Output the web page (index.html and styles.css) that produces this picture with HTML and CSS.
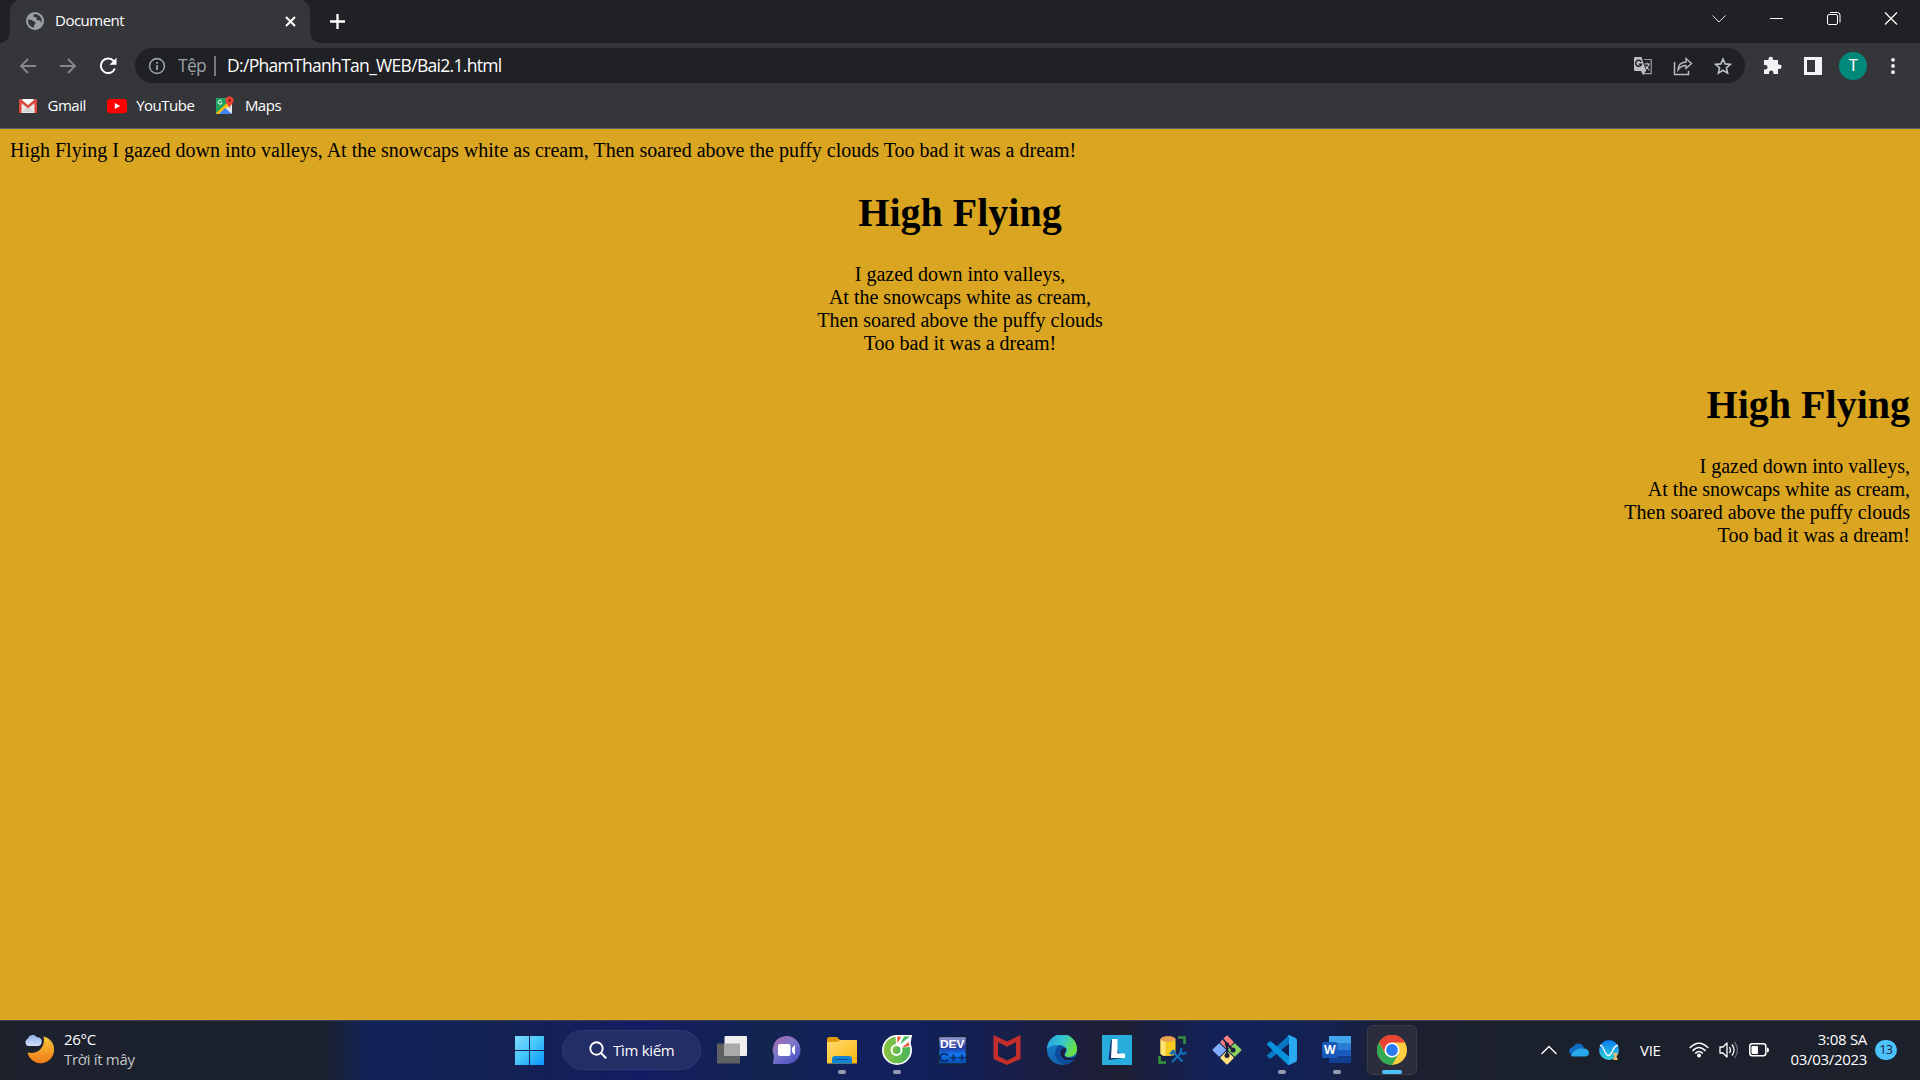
FILE: index.html
```html
<!DOCTYPE html>
<html lang="vi">
<head>
<meta charset="utf-8">
<title>Document</title>
<link rel="stylesheet" href="styles.css">
</head>
<body>
<header class="tabstrip">
  <div class="tab">
    <svg class="tab-icon" width="18" height="18" viewBox="0 0 18 18"><circle cx="9" cy="9" r="9" fill="#9aa0a6"/><path d="M2 7.500c2 .3 4 .2 5 1.500 1 1 2.500 .5 2.500 2 0 1.600-1.700 1.600-1.500 4.500C4 15 1.800 12 2 7.500zM8 2c.2 1.500-1.200 2-.3 3 1 .8 1.800-.6 2.600.5.800 1-.6 2 .7 2.600 1.300.5 2-.2 3 .7.900.7.600 1.800 1.600 1.700C16.500 5.500 13 1.800 8 2z" fill="#35363a"/></svg>
    <span class="tab-title">Document</span>
    <svg width="11" height="11" viewBox="0 0 11 11"><path d="M1 1l9 9M10 1l-9 9" stroke="#fff" stroke-width="2"/></svg>
  </div>
  <svg class="new-tab" width="15" height="15" viewBox="0 0 15 15"><path d="M7.500 0v15M0 7.500h15" stroke="#fff" stroke-width="2.300"/></svg>
  <div class="window-buttons">
    <svg width="14" height="14" viewBox="0 0 14 14"><path d="M.5 3.500l6.500 6.500L13.500 3.500" fill="none" stroke="#ddd"/></svg>
    <svg width="14" height="14" viewBox="0 0 14 14"><path d="M1 6.500h13" stroke="#fff"/></svg>
    <svg width="14" height="14" viewBox="0 0 14 14"><rect x=".5" y="2.500" width="10" height="10" rx="1.500" fill="none" stroke="#fff"/><path d="M3 .5h7.500q2.500 0 2.500 2.500V10.500" fill="none" stroke="#fff"/></svg>
    <svg width="14" height="14" viewBox="0 0 14 14"><path d="M1 .5l12 12M13 .5L1 12.500" stroke="#fff" stroke-width="1.200"/></svg>
  </div>
</header>
<nav class="toolbar">
  <svg class="nav-icon" width="18" height="18" viewBox="0 0 18 18"><path d="M17 9H2M9 2L2 9l7 7" fill="none" stroke="#85878a" stroke-width="1.800"/></svg>
  <svg class="nav-icon" width="18" height="18" viewBox="0 0 18 18"><path d="M1 9h15M9 2l7 7-7 7" fill="none" stroke="#85878a" stroke-width="1.800"/></svg>
  <svg class="nav-icon" width="18" height="18" viewBox="0 0 18 18"><path d="M14.800 4.200A7.300 7.300 0 1 0 15.900 11.500" fill="none" stroke="#fff" stroke-width="2"/><path d="M17.500.8v7h-7z" fill="#fff"/></svg>
  <div class="omnibox">
    <svg width="18" height="18" viewBox="0 0 18 18"><circle cx="9" cy="9" r="7.400" fill="none" stroke="#9aa0a6" stroke-width="1.600"/><path d="M9 8v5M9 5v1.800" stroke="#9aa0a6" stroke-width="1.800"/></svg>
    <span class="scheme">Tệp</span>
    <span class="divider"></span>
    <span class="url">D:/PhamThanhTan_WEB/Bai2.1.html</span>
    <div class="omnibox-actions">
      <svg width="20" height="20" viewBox="0 0 20 20"><path d="M11 3.500h7.200v14.200H9.500" fill="none" stroke="#9b9c9e" stroke-width="1.200"/><path d="M2 1h6.500l4.500 14H2q-1 0-1-1V2q0-1 1-1zM8 15h5l-3 4z" fill="#bdbec0"/><path d="M8.200 5.800A3 3 0 1 0 8.500 8.200H5.800" fill="none" stroke="#202124" stroke-width="1.500"/><path d="M11.500 8h5.500M14 6.500V8M16 8q-1 4-4 6M12.500 10l4 4.500" fill="none" stroke="#bdbec0" stroke-width="1.100"/></svg>
      <svg width="20" height="20" viewBox="0 0 20 20"><path d="M1.500 6v12.500h14V15" fill="none" stroke="#b8babd" stroke-width="1.500"/><path d="M5 14q0-7.500 8-8V2.500l5.500 5-5.500 5V9.500Q8 9.500 5 14z" fill="none" stroke="#b8babd" stroke-width="1.400"/></svg>
      <svg width="20" height="20" viewBox="0 0 20 20"><path d="M10 3l2.100 4.900 5.300.5-4 3.500 1.200 5.200-4.600-2.800-4.600 2.800 1.200-5.200-4-3.500 5.300-.5z" fill="none" stroke="#bdc1c6" stroke-width="1.600"/></svg>
    </div>
  </div>
  <div class="toolbar-actions">
    <svg width="20" height="20" viewBox="0 0 20 20"><path d="M1 4h4.500V3a2.300 2.300 0 0 1 4.600 0V4H15v4.500h1.300a2.300 2.300 0 0 1 0 4.600H15V18h-4.500v-1.300a2.200 2.200 0 0 0-4.500 0V18H1v-4.500h1.300a2.300 2.300 0 0 0 0-4.600H1z" fill="#f1f3f4"/></svg>
    <svg width="20" height="20" viewBox="0 0 20 20"><path fill-rule="evenodd" d="M1 1h18v18H1zM4 4v12h8V4z" fill="#f1f3f4"/></svg>
    <span class="avatar">T</span>
    <svg width="20" height="20" viewBox="0 0 20 20" fill="#f1f3f4"><circle cx="10" cy="3.800" r="1.900"/><circle cx="10" cy="10" r="1.900"/><circle cx="10" cy="16.200" r="1.900"/></svg>
  </div>
</nav>
<nav class="bookmarks">
  <a class="bookmark"><svg width="20" height="20" viewBox="0 0 20 20"><path d="M1.500 3.500h17V17h-17z" fill="#e8e8e8"/><path d="M4 16l6-6 6 6z" fill="#d5d5d5"/><path d="M1 17V4q0-1 1.500-1L10 9.300 17.500 3Q19 3 19 4v13h-2.500V7L10 12.300 3.500 7v10z" fill="#db4437"/><path d="M4 3h12l-6 5z" fill="#fff"/></svg><span>Gmail</span></a>
  <a class="bookmark"><svg width="20" height="20" viewBox="0 0 20 20"><rect y="3" width="20" height="14.200" rx="3" fill="#f00"/><path d="M7.800 7v6l5.400-3z" fill="#fff"/></svg><span>YouTube</span></a>
  <a class="bookmark"><svg width="20" height="20" viewBox="0 0 20 20"><rect x="1" y="2" width="16" height="16" rx="1.500" fill="#e4e7ea"/><path d="M1 3q0-1 1-1h9l1 6-11 10z" fill="#1ca261"/><path d="M1 17L12 7l2 2.500L4 18H2z" fill="#fbbc05"/><path d="M4 18l6-6 7 6z" fill="#4285f4"/><path d="M6.700 5A2 2 0 1 0 7 7H5.300" fill="none" stroke="#fff"/><path d="M14.500.5a4 4 0 0 1 4 4c0 3-3 4-4 8-1-4-4-5-4-8a4 4 0 0 1 4-4z" fill="#ea4335"/><circle cx="14.500" cy="4.500" r="1.400" fill="#8b1d14"/></svg><span>Maps</span></a>
</nav>
<main class="page">
  High Flying I gazed down into valleys, At the snowcaps white as cream, Then soared above the puffy clouds Too bad it was a dream!
  <section class="poem centered">
    <h1>High Flying</h1>
    <p>I gazed down into valleys,<br>At the snowcaps white as cream,<br>Then soared above the puffy clouds<br>Too bad it was a dream!</p>
  </section>
  <section class="poem right">
    <h1>High Flying</h1>
    <p>I gazed down into valleys,<br>At the snowcaps white as cream,<br>Then soared above the puffy clouds<br>Too bad it was a dream!</p>
  </section>
</main>
<footer class="taskbar">
  <div class="weather">
    <svg width="30" height="30" viewBox="0 0 30 30"><defs><linearGradient id="moon" x2="0" y2="1"><stop stop-color="#f6c83a"/><stop offset="1" stop-color="#f07a18"/></linearGradient><linearGradient id="cloud" x2="0" y2="1"><stop stop-color="#8fb4ec"/><stop offset="1" stop-color="#d0ddf8"/></linearGradient></defs><path d="M19.500 1.500A13.500 13.500 0 1 1 3.500 17.500C13.500 20 22 12 19.500 1.500z" fill="url(#moon)"/><path d="M4 11a4 4 0 0 1 0-7.500 5 5 0 0 1 9-1.200c3-.3 5 1.800 4.800 4.700Q17 11 14 11z" fill="url(#cloud)"/></svg>
    <div class="weather-text"><span class="temp">26°C</span><span class="sky">Trời ít mây</span></div>
  </div>
  <div class="apps">
    <svg class="app" width="30" height="30" viewBox="0 0 30 30"><defs><linearGradient id="win" x2="1" y2="1"><stop stop-color="#7fdcfb"/><stop offset=".5" stop-color="#45c4fa"/><stop offset="1" stop-color="#0594fa"/></linearGradient></defs><path d="M1 1h14v14H1zM16 1h14v14H16zM1 16h14v14H1zM16 16h14v14H16z" fill="url(#win)"/></svg>
    <div class="search"><svg width="18" height="18" viewBox="0 0 18 18"><circle cx="7.500" cy="7.500" r="6.200" fill="none" stroke="#fff" stroke-width="1.900"/><path d="M12 12l5.200 5.200" stroke="#fff" stroke-width="2"/></svg><span>Tìm kiếm</span></div>
    <svg class="app" width="30" height="30" viewBox="0 0 30 30"><rect y="8.500" width="23" height="20" rx="1" fill="#5f6063"/><rect x="7.500" y="1" width="22.500" height="20" rx="1" fill="#eee"/><path d="M7.500 8.500H23V21H7.500z" fill="#aaa"/></svg>
    <svg class="app" width="30" height="30" viewBox="0 0 30 30"><defs><linearGradient id="chat" x1="0" y1=".2" x2=".6" y2="1"><stop stop-color="#a56bb4"/><stop offset=".45" stop-color="#7c78c8"/><stop offset="1" stop-color="#5356c5"/></linearGradient></defs><path d="M15 1a14 14 0 1 1-1 28H1l1-8A14 14 0 0 1 15 1z" fill="url(#chat)"/><rect x="6" y="9" width="12.500" height="12" rx="2" fill="#fff"/><path d="M20 13l3-3v10l-3-3z" fill="#fff"/></svg>
    <div class="app running"><svg width="30" height="30" viewBox="0 0 30 30"><defs><linearGradient id="folder" x2="1" y2="1"><stop stop-color="#ffdd70"/><stop offset="1" stop-color="#f9b50e"/></linearGradient></defs><path d="M0 12V4q0-2 2-2h8l3 3h5v7z" fill="#e19a07"/><path d="M0 7h10l3-2h17v23.500H0z" fill="url(#folder)"/><path d="M5 28.500V24q0-3 3-3h14q3 0 3 3v4.500z" fill="#1183d0"/><path d="M8.500 24.500h13" stroke="#07539b"/></svg></div>
    <div class="app running"><svg width="30" height="30" viewBox="0 0 30 30"><defs><linearGradient id="coc" x2="1"><stop stop-color="#8bc440"/><stop offset="1" stop-color="#46b35b"/></linearGradient></defs><circle cx="15" cy="15" r="15" fill="#fff"/><path d="M14 0h16l-4 9z" fill="#fff"/><circle cx="15" cy="15" r="13.300" fill="url(#coc)"/><path d="M14 13L13.500 0H30L28 12z" fill="#fff"/><circle cx="14.500" cy="15" r="5" fill="url(#coc)" stroke="#fff" stroke-width="2"/><path d="M15.300 8.500L15.300 1.500l4 .3z" fill="#ee5742"/><path d="M18 9.500L22 1.500 28 1.500z" fill="#4cb960"/><path d="M20 12.500L26.500 7l1 4z" fill="#ee5742"/></svg></div>
    <div class="app"><svg width="30" height="30" viewBox="0 0 30 30"><defs><linearGradient id="dev" x2="0" y2="1"><stop stop-color="#a3a4d8"/><stop offset=".4" stop-color="#243aa0"/><stop offset=".65" stop-color="#1178ef"/><stop offset="1" stop-color="#064ab0"/></linearGradient></defs><rect x="1.500" y="1.500" width="28" height="27.500" rx="1" fill="url(#dev)" stroke="#172338" stroke-width="1.500"/><text x="3" y="13" textLength="24.500" lengthAdjust="spacingAndGlyphs" class="dev-name">DEV</text><text x="1.500" y="27" textLength="28" lengthAdjust="spacingAndGlyphs" class="dev-cpp">C++</text></svg></div>
    <div class="app"><svg width="30" height="30" viewBox="0 0 30 30"><path d="M1.500 0L15 6.500 28.500 0v24L15 30 1.500 24zM6 7v14l9 4.500 9-4.500V7l-9 4.700z" fill="#c42e2b" fill-rule="evenodd"/></svg></div>
    <div class="app"><svg width="30" height="30" viewBox="0 0 30 30"><defs><linearGradient id="edge" x2="1" y2=".4"><stop offset=".1" stop-color="#25a5e0"/><stop offset=".55" stop-color="#34c7d0"/><stop offset="1" stop-color="#68df45"/></linearGradient><linearGradient id="edge-base" x2="0" y2="1"><stop stop-color="#1685d0"/><stop offset="1" stop-color="#1462b0"/></linearGradient></defs><circle cx="15" cy="15" r="15" fill="url(#edge-base)"/><path d="M0 14A15 15 0 0 1 30 14c0 6-5 8-9 8-3 0-4-2-2.500-3.500C22 14 18 10 12 10Q4 9.500 0 14z" fill="url(#edge)"/><path d="M12 10.500c-6 5-5 14 3 18 5 2 10 0 13-5-4 1.500-8 1.500-10-1-2-2.500-1-5 .5-7-.5-3-3-5-6.500-5z" fill="#0f4c9b"/><path d="M18.500 13c2 3-2 5-1 7.500 2 3.500 8 3 13 .5v5l-2-2.500c-6 3-14 1.500-15-4.500-.3-3 1.500-6 5-6z" fill="#1b1e40"/></svg></div>
    <div class="app"><svg width="30" height="30" viewBox="0 0 30 30"><path d="M0 0h30v30H0z" fill="#27acdc"/><path d="M9 4L6.500 25 20 23z" fill="#15326a"/><path d="M10 4h5.500v14.500h7.500V23H9z" fill="#fff"/></svg></div>
    <div class="app"><svg width="30" height="30" viewBox="0 0 30 30"><path d="M3.500 4v14q0 3 7.500 3t7.500-3V4z" fill="#f8ca20"/><path d="M3.500 4v14q0 2.500 5 3V4z" fill="#ffe477"/><ellipse cx="11" cy="4" rx="7.500" ry="3" fill="#e8a04e"/><path d="M21 2.500h6.500V9M2.500 21v6.500H9" fill="none" stroke="#36923d" stroke-width="2.600"/><path d="M15 27l10-10M16 17l9.500 9.500" stroke="#1470bd" stroke-width="2.200"/><path d="M12 18.500l4-4 3 1.500-4 4z" fill="#1470bd"/><path d="M24.500 13l-1 4 3 2 3-1.500" fill="none" stroke="#1470bd" stroke-width="2"/></svg></div>
    <div class="app"><svg width="30" height="30" viewBox="0 0 30 30"><g transform="rotate(45 15 15)"><rect x="4.500" y="4.500" width="10" height="10" rx="1" fill="#ff817e"/><rect x="15.500" y="4.500" width="10" height="10" rx="1" fill="#89d05d"/><rect x="4.500" y="15.500" width="10" height="10" rx="1" fill="#82adff"/><rect x="15.500" y="15.500" width="10" height="10" rx="1" fill="#ffe182"/></g><path d="M11 4l4 5v11M15 9l6 6" fill="none" stroke="#1c203b" stroke-width="1.800"/><circle cx="15" cy="9.500" r="2.200" fill="#1c203b"/><circle cx="15" cy="20.500" r="2.500" fill="#1c203b"/><circle cx="21" cy="15" r="2.500" fill="#1c203b"/></svg></div>
    <div class="app running"><svg width="30" height="30" viewBox="0 0 30 30"><path d="M22 0v8.500L4 23.500H2.500L0 21.300v-1L21 1z" fill="#0879c0"/><path d="M0 9.800v-1L2.500 6.500H4l18 15V30h-1z" fill="#0991dc"/><path d="M22 0l6.500 3Q30 4 30 5v20q0 1-1.500 2L22 30q-1 0-1.500-1l1.500-1V2l-1.500-1z" fill="#28a9f2"/></svg></div>
    <div class="app running"><svg width="30" height="30" viewBox="0 0 30 30"><path d="M7 1h22v7H7z" fill="#41a5ee"/><path d="M7 8h22v7H7z" fill="#2b7cd3"/><path d="M7 15h22v6.500H7z" fill="#185abd"/><path d="M7 21.500h22v6.500H7z" fill="#103f91"/><rect y="7" width="15.500" height="16" rx="1.500" fill="#1859b9"/><text x="7.700" y="19" text-anchor="middle" class="word-letter">W</text></svg></div>
    <div class="app running active"><svg width="30" height="30" viewBox="0 0 30 30"><circle cx="15" cy="15" r="15" fill="#ffcd40"/><path d="M2 7.500A15 15 0 0 1 28 7.500H15l-6.500 11z" fill="#ea4335"/><path d="M2 7.500A15 15 0 0 0 15 30l6.500-11H8.500z" fill="#34a853"/><circle cx="15" cy="15" r="7.500" fill="#fff"/><circle cx="15" cy="15" r="5.900" fill="#2a7bef"/></svg></div>
  </div>
  <div class="tray">
    <svg width="16" height="10" viewBox="0 0 16 10"><path d="M.5 9L8 1.500 15.500 9" fill="none" stroke="#fff" stroke-width="1.300"/></svg>
    <svg class="onedrive" width="20" height="14" viewBox="0 0 20 14"><path d="M3 11Q0 11 0 8q.5-3.500 4-4Q6 0 10 .5q4 .5 5 4.500l-7 7z" fill="#0f6bc4"/><path d="M2 12q3-5 7-6 3-1 5-.5h2q4 1 4 4.500-.5 3.500-4 3.500H4q-2 0-2-1.500z" fill="#28a8ea"/></svg>
    <svg class="sync" width="20" height="20" viewBox="0 0 20 20"><defs><linearGradient id="sync" x2="0" y2="1"><stop stop-color="#0879ef"/><stop offset="1" stop-color="#37d6d8"/></linearGradient></defs><circle cx="10" cy="10" r="10" fill="url(#sync)"/><path d="M1 5.500c4-1 4 10 8.500 10S13 5.500 19 5.500" fill="none" stroke="#fff" stroke-width="1.300"/><path d="M14 13h5l-1.700 3.500L19 20h-5l1.700-3.500z" fill="#f1bd72"/></svg>
    <span class="lang">VIE</span>
    <svg class="wifi" width="20" height="16" viewBox="0 0 20 16"><path d="M.7 6Q10-3.500 19.300 6M3.500 9Q10 2 16.500 9M6.200 11.500Q10 7.500 13.800 11.500" fill="none" stroke="#fff" stroke-width="1.500"/><circle cx="10" cy="13.500" r="2" fill="#fff"/></svg>
    <svg class="volume" width="20" height="18" viewBox="0 0 20 18"><path d="M1 6h3l4-4v14l-4-4H1z" fill="none" stroke="#fff" stroke-width="1.300" stroke-linejoin="round"/><path d="M10.500 6q2 3 0 6M13 3.500q4 5.500 0 11" fill="none" stroke="#fff" stroke-width="1.300"/><path d="M15.500 1q6 8 0 16" fill="none" stroke="#666b75" stroke-width="1.300"/></svg>
    <svg class="battery" width="20" height="14" viewBox="0 0 20 14"><rect x=".8" y=".8" width="16" height="12" rx="2.500" fill="none" stroke="#fff" stroke-width="1.500"/><rect x="2.500" y="3" width="6.500" height="8" rx="1" fill="#fff"/><path d="M18 4.500q2 0 2 2.500t-2 2.500z" fill="#fff"/></svg>
    <div class="clock"><span class="time">3:08 SA</span><span class="date">03/03/2023</span></div>
    <span class="badge">13</span>
  </div>
</footer>
</body>
</html>
```
FILE: styles.css
```css
* { box-sizing: border-box; }
body {
  margin: 0;
  height: 1080px;
  display: flex;
  flex-direction: column;
  overflow: hidden;
  font-family: "Open Sans", "Noto Sans", sans-serif;
  font-size: 15px;
  letter-spacing: -0.3px;
  color: #fff;
  background: #35363a;
}
svg { display: block; flex: none; }
span { white-space: nowrap; }

.tabstrip {
  flex: none;
  display: flex;
  height: 43px;
  background: #202124;
  padding-left: 10px;
}
.tab {
  position: relative;
  display: flex;
  align-items: center;
  width: 300px;
  padding: 0 14.500px 1px 16px;
  background: #35363a;
  border-radius: 10px 10px 0 0;
}
.tab::before, .tab::after {
  content: "";
  position: absolute;
  bottom: 0;
  width: 10px;
  height: 10px;
}
.tab::before { left: -10px; background: radial-gradient(circle at 0 0, transparent 9.500px, #35363a 10px); }
.tab::after { right: -10px; background: radial-gradient(circle at 100% 0, transparent 9.500px, #35363a 10px); }
.tab-title { flex: 1; margin-left: 11px; padding-bottom: 2px; letter-spacing: -0.500px; }
.new-tab { margin: 14px 0 0 20px; }
.window-buttons { display: flex; gap: 43.300px; margin: 12px 22px 0 auto; }

.toolbar {
  flex: none;
  display: flex;
  align-items: center;
  height: 45px;
  padding: 0 17px 0 19px;
}
.nav-icon { margin-right: 22px; }
.omnibox {
  display: flex;
  align-items: center;
  width: 1610px;
  height: 35px;
  margin-left: -4px;
  padding: 0 12px 0 13px;
  border-radius: 18px;
  background: #202124;
  font-size: 17.500px;
}
.scheme { margin-left: 12px; padding-bottom: 1px; color: #9aa0a6; letter-spacing: -0.700px; }
.divider { width: 2px; height: 20px; margin: 0 11px 0 8px; background: #77797c; }
.url { padding-bottom: 1px; letter-spacing: -0.700px; }
.omnibox-actions { display: flex; gap: 20px; margin-left: auto; }
.toolbar-actions { display: flex; align-items: center; gap: 20px; margin-left: 18px; }
.avatar {
  width: 28px;
  height: 28px;
  margin: 0 -4px;
  border-radius: 50%;
  background: #00897b;
  font: 16px/28px Roboto, sans-serif;
  text-align: center;
}

.bookmarks {
  flex: none;
  display: flex;
  gap: 21px;
  height: 41px;
  padding: 8px 18px 0;
  border-bottom: 1px solid #5f6064;
}
.bookmark { display: flex; align-items: center; height: 20px; gap: 9.500px; letter-spacing: -0.500px; }
.bookmark span { padding-bottom: 2px; }

.page {
  flex: 1;
  padding: 10px;
  background: #daa520;
  color: #000;
  font: 20px/23px "Liberation Serif", "Times New Roman", serif;
  letter-spacing: 0;
}
.poem h1 { margin: 27px 0; font-size: 40px; line-height: 46px; }
.centered h1 { margin-top: 28px; }
.poem p { margin: 0; }
.centered { text-align: center; }
.right { text-align: right; }

.taskbar {
  flex: none;
  display: flex;
  align-items: center;
  height: 60px;
  box-shadow: inset 0 1px #3a4250;
  background: linear-gradient(90deg, #1c212c 0, #1b222f 325px, #11235a 370px, #132252 500px, #141d63 640px, #13244f 770px, #12205c 850px, #12205a 940px, #1a1e42 1040px, #1e1f33 1120px, #122158 1210px, #132252 1320px, #1c1f30 1400px, #1b212c 1500px, #1c212c 1920px);
}
.weather { display: flex; align-items: center; gap: 10px; width: 514px; padding-left: 24px; }
.weather-text { display: flex; flex-direction: column; padding-bottom: 3px; line-height: 20px; }
.sky { color: #c5c7ca; }
.apps { display: flex; align-items: center; gap: 25px; }
.app { position: relative; width: 30px; height: 30px; }
.search {
  display: flex;
  align-items: center;
  gap: 6px;
  width: 139px;
  height: 40px;
  margin: 0 -9px 0 -7px;
  padding-left: 26px;
  border-radius: 20px;
  border: 1px solid #2e3a70;
  background: #232d66;
}
.running::after {
  content: "";
  position: absolute;
  left: 11px;
  top: 35px;
  width: 8px;
  height: 4px;
  border-radius: 2px;
  background: #969bb0;
}
.active::before {
  content: "";
  position: absolute;
  inset: -10px;
  border: 1px solid #3a3c4b;
  border-radius: 6px;
  background: #2b2d3c;
}
.active svg { position: relative; }
.active::after { left: 5px; width: 20px; background: #4cc2ff; }
.dev-name { font: bold 11.500px "Liberation Sans", sans-serif; fill: #fff; letter-spacing: 0; }
.dev-cpp { font: bold 12.500px "Liberation Sans", sans-serif; fill: #092a66; letter-spacing: 0; }
.word-letter { font: bold 12px "Open Sans", sans-serif; fill: #fff; letter-spacing: 0; }

.tray { display: flex; align-items: center; margin-left: auto; padding-right: 23px; }
.onedrive { margin-left: 12px; }
.sync { margin-left: 10px; }
.lang { width: 22px; margin-left: 21px; }
.wifi { margin-left: 27px; }
.volume { margin-left: 10px; }
.battery { margin-left: 10px; }
.clock {
  display: flex;
  flex-direction: column;
  align-items: flex-end;
  width: 98px;
  padding-bottom: 3px;
  line-height: 20px;
}
.badge {
  width: 22px;
  height: 20px;
  margin-left: 8px;
  border-radius: 10px;
  background: #4cc2ff;
  color: #15202c;
  font-size: 12px;
  line-height: 20px;
  text-align: center;
}
```
